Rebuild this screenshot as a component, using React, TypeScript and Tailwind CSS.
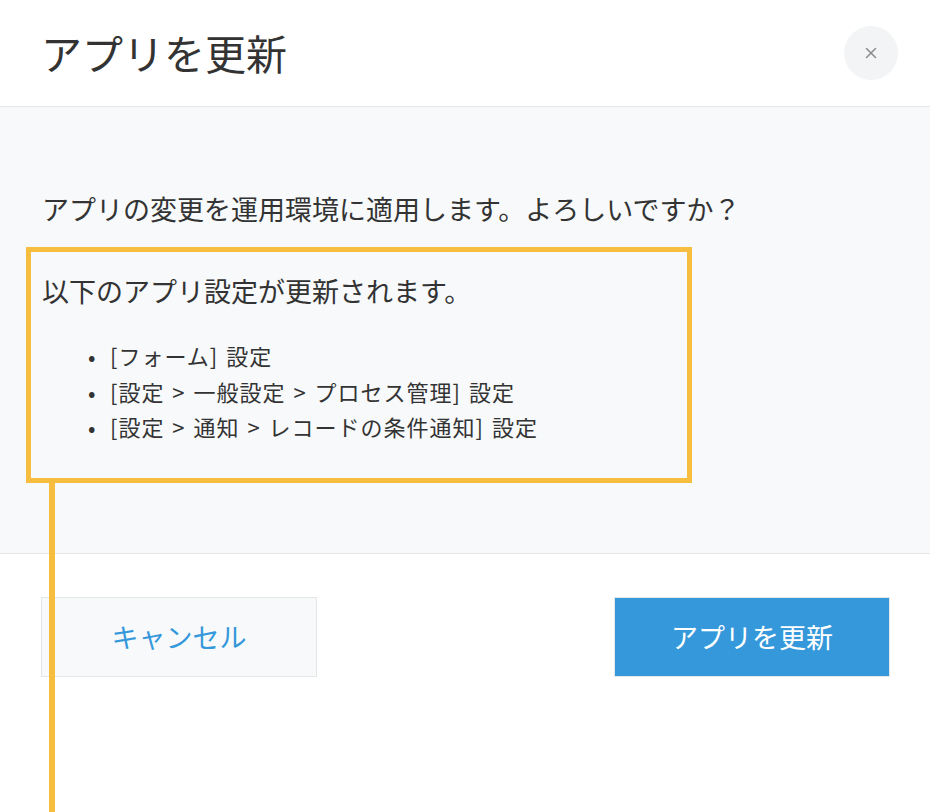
import { X } from 'lucide-react';

const items = [
  '[フォーム] 設定',
  '[設定 > 一般設定 > プロセス管理] 設定',
  '[設定 > 通知 > レコードの条件通知] 設定',
];

export default function App() {
  return (
    <div
      className="h-[812px] w-full overflow-hidden bg-white text-[#333333] flex flex-col"
      style={{ fontFamily: '"Noto Sans CJK JP", "Noto Sans", sans-serif' }}
    >
      <header className="h-[107px] shrink-0 flex items-center justify-between pl-[41px] pr-[32px] border-b border-[#e3e7e8]">
        <h1 className="text-[41px] leading-none font-normal -mt-[2px]">アプリを更新</h1>
        <button className="w-[54px] h-[54px] rounded-full bg-[#f3f4f5] flex items-center justify-center text-[#8c8c8c]">
          <X className="w-[18px] h-[18px]" strokeWidth={2} />
        </button>
      </header>

      <main className="h-[447px] shrink-0 bg-[#f7f9fa] border-b border-[#e3e7e8] px-[42px] pt-[82px]">
        <p className="text-[27px] leading-[40px]">アプリの変更を運用環境に適用します。よろしいですか？</p>

        {/* highlighted section */}
        <div className="relative mt-[18px] -ml-[16px] w-[666px] border-[5px] border-[#f7bd3e] pl-[11px] pt-[19px] pb-[33px]">
          <p className="text-[27px] leading-[40px]">以下のアプリ設定が更新されます。</p>
          <ul className="mt-[27px] text-[22px] leading-[35.5px] tracking-[1px] [word-spacing:2px]">
            {items.map((item) => (
              <li key={item} className="flex pl-[46px]">
                <span className="w-[22px] shrink-0">•</span>
                <span>{item}</span>
              </li>
            ))}
          </ul>
          <div className="absolute left-[18px] top-[calc(100%+5px)] w-[6px] h-[340px] bg-[#f7bd3e] z-10" />
        </div>
      </main>

      <footer className="flex-1 bg-white flex justify-between items-start pl-[41px] pr-[40px] pt-[43px]">
        <button className="w-[276px] h-[80px] bg-[#f7f9fa] border border-[#e3e7e8] text-[#3498db] text-[27px]">
          キャンセル
        </button>
        <button className="w-[276px] h-[80px] bg-[#3498db] border border-[#e3e7e8] text-white text-[27px]">
          アプリを更新
        </button>
      </footer>
    </div>
  );
}
